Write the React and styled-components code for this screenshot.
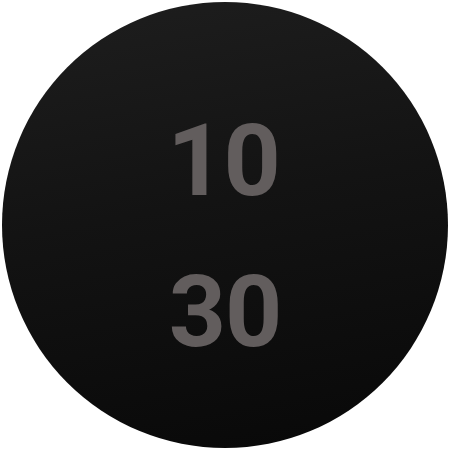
import React from "react";
import styled, { createGlobalStyle } from "styled-components";

const Global = createGlobalStyle`
  html, body { margin: 0; padding: 0; background: #ffffff; }
  body { width: 450px; height: 450px; overflow: hidden; font-family: Roboto, "Liberation Sans", sans-serif; }
`;

const Page = styled.div`
  width: 450px;
  height: 450px;
  display: flex;
  align-items: center;
  justify-content: center;
`;

const Face = styled.div`
  width: 446px;
  height: 446px;
  border-radius: 50%;
  background: linear-gradient(170deg, #1e1e1e 0%, #131313 45%, #080808 100%);
  display: flex;
  flex-direction: column;
  align-items: center;
  box-sizing: border-box;
  padding-top: 109px;
  gap: 51px;
`;

const Digits = styled.div`
  font-family: Roboto, "Liberation Sans", sans-serif;
  font-weight: 700;
  font-size: 100px;
  line-height: 100px;
  height: 100px;
  color: #625d5d;
  letter-spacing: -1px;
  margin-left: ${(p) => p.$shift || 0}px;
`;

export default function App() {
  return (
    <>
      <Global />
      <Page>
        <Face>
          <Digits $shift={-3}>10</Digits>
          <Digits>30</Digits>
        </Face>
      </Page>
    </>
  );
}
